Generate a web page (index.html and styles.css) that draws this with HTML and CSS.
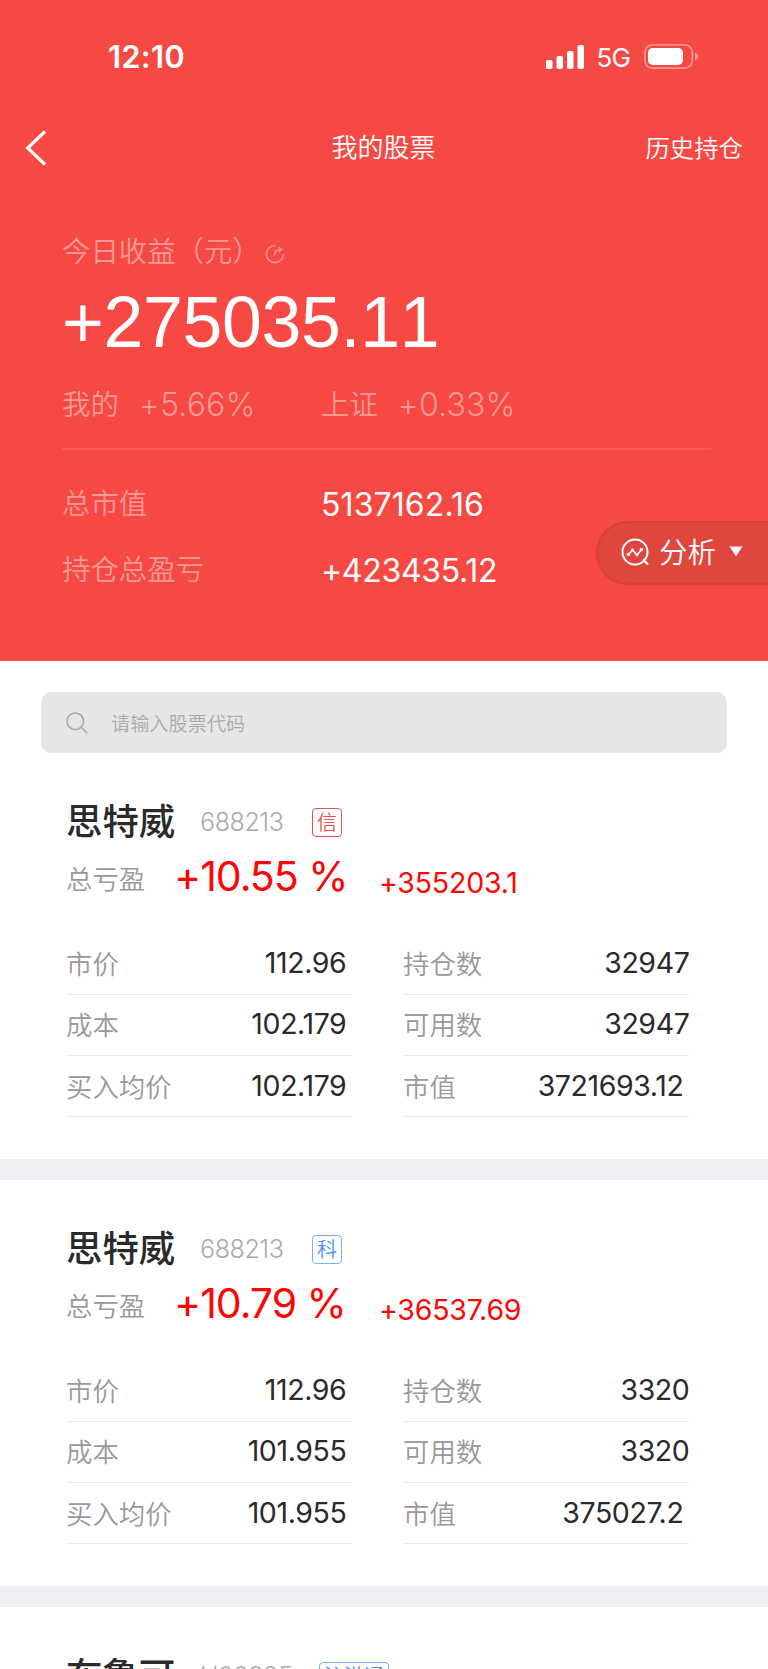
FILE: index.html
```html
<!DOCTYPE html>
<html lang="zh-CN">
<head>
<meta charset="utf-8">
<title>我的股票</title>
<link rel="stylesheet" href="styles.css">
</head>
<body>
<div class="screen">
  <header class="hero">
    <div class="status">
      <span class="clock">12:10</span>
      <div class="status-right">
        <svg class="signal" width="38" height="24" viewBox="0 0 38 24" fill="#fff"><rect x="0" y="15" width="6.5" height="9" rx="1.8"/><rect x="10.5" y="11" width="6.5" height="13" rx="1.8"/><rect x="21" y="6" width="6.5" height="18" rx="1.8"/><rect x="31.500" y="0" width="6.500" height="24" rx="1.8"/></svg>
        <span class="net">5G</span>
        <svg class="battery" width="54" height="25" viewBox="0 0 54 25"><rect x="0.9" y="0.9" width="47.400" height="23.2" rx="7.500" fill="none" stroke="#fff" stroke-opacity=".42" stroke-width="1.800"/><rect x="4" y="4" width="35" height="17" rx="4.800" fill="#fff"/><path d="M51 8.500c4 1.500 4 6.500 0 8z" fill="#fff" fill-opacity=".45"/></svg>
      </div>
    </div>
    <nav class="nav">
      <svg class="back" width="24" height="36" viewBox="0 0 24 36"><path d="M21 1.500 3.700 18 21 34.500" fill="none" stroke="#fff" stroke-width="3.200"/></svg>
      <h1 class="title">我的股票</h1>
      <a class="history">历史持仓</a>
    </nav>
    <section class="summary">
      <div class="today">今日收益（元）<svg class="refresh" width="20" height="20" viewBox="0 0 20 20" fill="none" stroke="#fff" stroke-opacity=".4" stroke-width="1.500"><path d="M10 1.500A8.500 8.500 0 1 0 18.500 10"/><path d="M9.500 11.500c0-4 2-6 6-6M13.500 3l3 2.500-3 2.800"/></svg></div>
      <div class="profit">+275035.11</div>
      <div class="rates">
        <div class="rate"><span>我的</span><span class="pct">+5.66%</span></div>
        <div class="rate"><span>上证</span><span class="pct">+0.33%</span></div>
      </div>
      <dl class="totals">
        <dt>总市值</dt><dd class="t1">5137162.16</dd>
        <dt>持仓总盈亏</dt><dd class="t2">+423435.12</dd>
      </dl>
    </section>
    <button class="analyze">
      <svg class="chart" width="29" height="29" viewBox="0 0 29 29" fill="none" stroke="#fff" stroke-width="2"><circle cx="14" cy="14" r="12.500"/><path d="M22 21.500l5 5" stroke-width="2.300"/><path d="M7.500 16.500l4-4.500 4.500 5 4.500-5.500" stroke-width="1.500"/><g fill="#fff" stroke="none"><circle cx="7.500" cy="16.500" r="1.800"/><circle cx="11.500" cy="12" r="1.400"/><circle cx="16" cy="17" r="1.400"/><circle cx="20.500" cy="11.500" r="1.800"/></g></svg>
      <span>分析</span>
      <svg class="caret" width="14" height="11" viewBox="0 0 14 11"><path d="M.5.5h13L7 10.500z" fill="#fff" fill-opacity=".92"/></svg>
    </button>
  </header>
  <label class="search">
    <svg width="23" height="23" viewBox="0 0 23 23" fill="none" stroke="#aaa" stroke-width="1.600"><circle cx="9.300" cy="9.300" r="8.300"/><path d="M15.300 15.300l6 6"/></svg>
    <span>请输入股票代码</span>
  </label>
  <main>
    <article class="card">
      <div class="head"><h2>思特威</h2><span class="code">688213</span><span class="tag tag-red">信</span></div>
      <div class="gain"><span class="lbl">总亏盈</span><span class="big">+10.55 %</span><span class="amt">+355203.1</span></div>
      <div class="grid">
        <div class="row"><span>市价</span><b>112.96</b></div><div class="row r"><span>持仓数</span><b>32947</b></div>
        <div class="row"><span>成本</span><b>102.179</b></div><div class="row r"><span>可用数</span><b>32947</b></div>
        <div class="row"><span>买入均价</span><b>102.179</b></div><div class="row"><span>市值</span><b>3721693.12</b></div>
      </div>
    </article>
    <article class="card">
      <div class="head"><h2>思特威</h2><span class="code">688213</span><span class="tag tag-blue">科</span></div>
      <div class="gain"><span class="lbl">总亏盈</span><span class="big">+10.79 %</span><span class="amt">+36537.69</span></div>
      <div class="grid">
        <div class="row"><span>市价</span><b>112.96</b></div><div class="row r"><span>持仓数</span><b>3320</b></div>
        <div class="row"><span>成本</span><b>101.955</b></div><div class="row r"><span>可用数</span><b>3320</b></div>
        <div class="row"><span>买入均价</span><b>101.955</b></div><div class="row"><span>市值</span><b>375027.2</b></div>
      </div>
    </article>
    <article class="card">
      <div class="head"><h2>布鲁可</h2><span class="code code-hk">H00325</span><span class="tag tag-blue tag-wide">沪港通</span></div>
    </article>
  </main>
</div>
</body>
</html>
```

FILE: styles.css
```css
* { box-sizing: border-box; margin: 0; padding: 0; }
body { background: #fff; font-family: Inter, "Noto Sans CJK SC", sans-serif; font-weight: 350; }
.screen { width: 768px; height: 1669px; overflow: hidden; }
.hero { position: relative; height: 661px; background: #f64944; color: #fff; }
.status { height: 113px; padding: 0 70px 0 108px; display: flex; justify-content: space-between; align-items: center; }
.clock { font-size: 31px; font-weight: 600; letter-spacing: .2px; line-height: 40px; padding-top: 1px; }
.status-right { display: flex; align-items: center; }
.net { font-size: 26px; font-weight: 400; line-height: 30px; margin: 2px 14px 0 12px; letter-spacing: -.8px; }
.nav { height: 70px; display: grid; grid-template-columns: 1fr auto 1fr; align-items: center; padding: 0 25px 0 24px; }
.title { font-size: 26px; font-weight: 350; line-height: 40px; }
.history { font-size: 24.400px; line-height: 40px; justify-self: end; }
.summary { padding: 48px 57px 0 62px; }
.today { font-size: 28.400px; line-height: 42px; display: flex; align-items: center; color: rgba(255,255,255,.45); }
.refresh { margin: 4px 0 0 4px; }
.profit { font-family: "Liberation Sans", sans-serif; font-weight: 400; font-size: 71.600px; line-height: 80px; margin-top: 9px; font-kerning: none; letter-spacing: -.3px; }
.rates { display: grid; grid-template-columns: 259px 1fr; height: 88px; border-bottom: 2px solid rgba(255,255,255,.1); padding-top: 22px; color: rgba(255,255,255,.45); font-size: 28.400px; line-height: 42px; }
.rate { display: flex; }
.pct { font-size: 32px; margin-left: 20px; letter-spacing: .2px; }
.totals { display: grid; grid-template-columns: 259px 1fr; grid-auto-rows: 66px; align-items: center; padding-top: 18px; }
.totals dt { font-size: 28.400px; color: rgba(255,255,255,.45); }
.totals dd { font-size: 32px; padding-top: 6px; font-weight: 400; }
.t1 { letter-spacing: .1px; }
.t2 { letter-spacing: -.3px; }
.analyze { position: absolute; right: -2px; top: 521px; width: 174px; height: 64px; border: 2px solid #d93f3b; border-radius: 32px 0 0 32px; background: #df463e; color: #fff; font: inherit; font-size: 28.400px; display: flex; align-items: center; padding-left: 23px; }
.analyze .chart { margin-top: -1px; }
.analyze span { margin: 0 13px 0 9px; line-height: 40px; }
.analyze .caret { margin-top: -3px; }
.search { display: flex; align-items: center; margin: 31px 41px 0; height: 61px; border-radius: 10px; background: #e6e6e6; padding-left: 25px; color: #aaa; font-size: 19.200px; }
.search svg { margin-top: 2px; }
.search span { margin-left: 22px; }
.card { height: 427px; padding: 47px 79px 0 66px; border-bottom: 21px solid #efeef4; }
.head { display: flex; align-items: center; height: 44px; }
.head h2 { font-size: 36.400px; font-weight: 500; color: #2a2a2a; line-height: 44px; width: 134px; }
.code { font-size: 25px; font-weight: 300; color: #aaa; width: 112px; letter-spacing: -.4px; }
.code-hk { width: 119px; }
.tag { border: 1px solid; border-radius: 4px; width: 30px; height: 29px; font-size: 20px; font-weight: 350; line-height: 28px; text-align: center; }
.tag-red { color: #e45152; }
.tag-blue { color: #4c92e6; border-color: #7cb2f3; }
.tag-wide { width: 70px; }
.gain { display: flex; height: 66px; line-height: 64px; color: #fe0505; }
.lbl { font-size: 26.400px; color: #999; width: 108px; padding-top: 3px; }
.big { font-size: 41px; font-weight: 400; width: 205px; letter-spacing: -1px; }
.amt { font-size: 28.500px; font-weight: 400; padding-top: 7px; letter-spacing: -.2px; }
.grid { display: grid; grid-template-columns: 286px 286px; column-gap: 51px; grid-auto-rows: 61.300px; padding-top: 23.500px; }
.row { display: flex; justify-content: space-between; align-items: center; border-bottom: 1px solid #ececec; font-size: 26.400px; color: #999; padding: 0 6px 2px 0; }
.row.r { padding-right: 0; }
.row b { font-size: 28.500px; font-weight: 400; color: #2a2a2a; letter-spacing: -.4px; margin-right: -.4px; }
```
